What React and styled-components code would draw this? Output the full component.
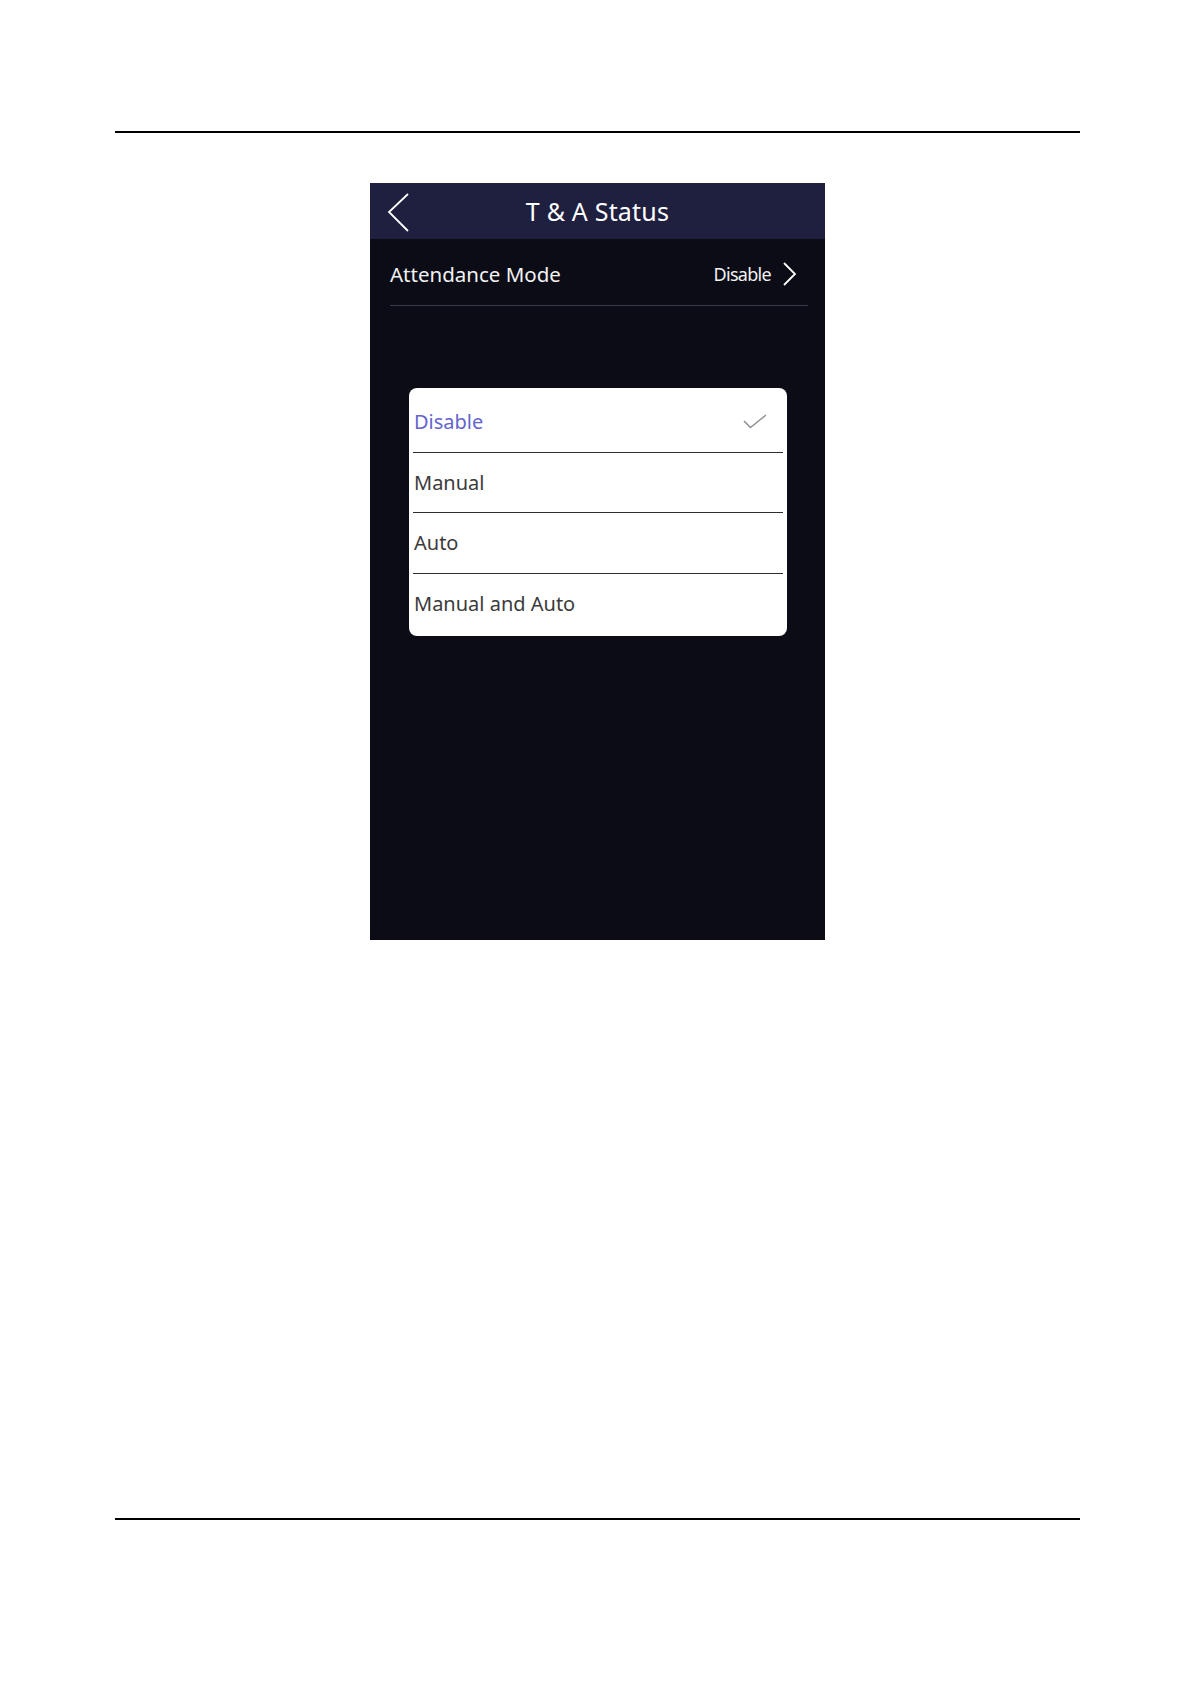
import styled, { createGlobalStyle } from "styled-components";

const GlobalStyle = createGlobalStyle`
  html, body {
    margin: 0;
    padding: 0;
    background: #fff;
  }
  body {
    font-family: "Noto Sans", "Open Sans", sans-serif;
  }
`;

const Page = styled.div`
  width: 1181px;
  height: 1685px;
  padding: 131px 101px 0 115px;
  box-sizing: border-box;
  display: flex;
  flex-direction: column;
  align-items: center;
`;

const Rule = styled.div`
  align-self: stretch;
  height: 2px;
  background: #000;
  margin-top: ${(props) => props.top || "0px"};
`;

const Phone = styled.div`
  width: 455px;
  height: 757px;
  margin-top: 50px;
  background: #0c0c17;
  display: flex;
  flex-direction: column;
`;

const Header = styled.div`
  height: 56px;
  background: #1f2040;
  display: flex;
  align-items: center;
  justify-content: center;
  position: relative;
`;

const BackButton = styled.div`
  position: absolute;
  left: 17px;
  top: 10px;
  width: 24px;
  height: 40px;
  display: flex;
`;

const Title = styled.h1`
  margin: 0;
  font-size: 25px;
  font-weight: 400;
  color: #fff;
  letter-spacing: 0.2px;
`;

const SettingRow = styled.div`
  height: 67px;
  margin: 0 17px 0 20px;
  border-bottom: 1.5px solid #3a3b48;
  display: flex;
  align-items: center;
  justify-content: space-between;
  box-sizing: border-box;
  padding-top: 3px;
`;

const Label = styled.span`
  font-size: 20.5px;
  color: #f2f2f2;
`;

const Value = styled.div`
  display: flex;
  align-items: center;
  gap: 11px;
  padding-right: 11px;
  color: #f2f2f2;
  font-size: 18px;
  letter-spacing: -0.7px;
`;

const Popup = styled.div`
  margin: 82px 38px 0 39px;
  background: #fff;
  border-radius: 8px;
  padding: 4px 4px 0;
  display: flex;
  flex-direction: column;
`;

const Option = styled.div`
  height: ${(props) => (props.last ? "62px" : "60.5px")};
  border-bottom: ${(props) => (props.last ? "none" : "1.5px solid #2e2e2e")};
  box-sizing: border-box;
  display: flex;
  align-items: center;
  justify-content: space-between;
  padding: 0 16px ${(props) => (props.last ? "3px" : "0")} 1px;
  font-size: 20px;
  color: ${(props) => (props.selected ? "#6464cf" : "#3b3b3b")};
`;

const Check = () => (
  <svg width="24" height="15" viewBox="0 0 24 15" fill="none">
    <path d="M1 7 L7.5 13.5 L23 1" stroke="#8e8e96" strokeWidth="1.5" />
  </svg>
);

const options = ["Disable", "Manual", "Auto", "Manual and Auto"];

export default function App() {
  return (
    <>
      <GlobalStyle />
      <Page>
        <Rule />
        <Phone>
          <Header>
            <BackButton>
              <svg width="24" height="40" viewBox="0 0 24 40" fill="none">
                <path d="M21 1 L2 19 L21 38" stroke="#fff" strokeWidth="1.8" />
              </svg>
            </BackButton>
            <Title>T &amp; A Status</Title>
          </Header>
          <SettingRow>
            <Label>Attendance Mode</Label>
            <Value>
              Disable
              <svg width="15" height="24" viewBox="0 0 15 24" fill="none">
                <path d="M2 1 L13 12 L2 23" stroke="#fff" strokeWidth="1.8" />
              </svg>
            </Value>
          </SettingRow>
          <Popup>
            {options.map((opt, i) => (
              <Option
                key={opt}
                selected={i === 0}
                last={i === options.length - 1}
              >
                {opt}
                {i === 0 && <Check />}
              </Option>
            ))}
          </Popup>
        </Phone>
        <Rule top="578px" />
      </Page>
    </>
  );
}
